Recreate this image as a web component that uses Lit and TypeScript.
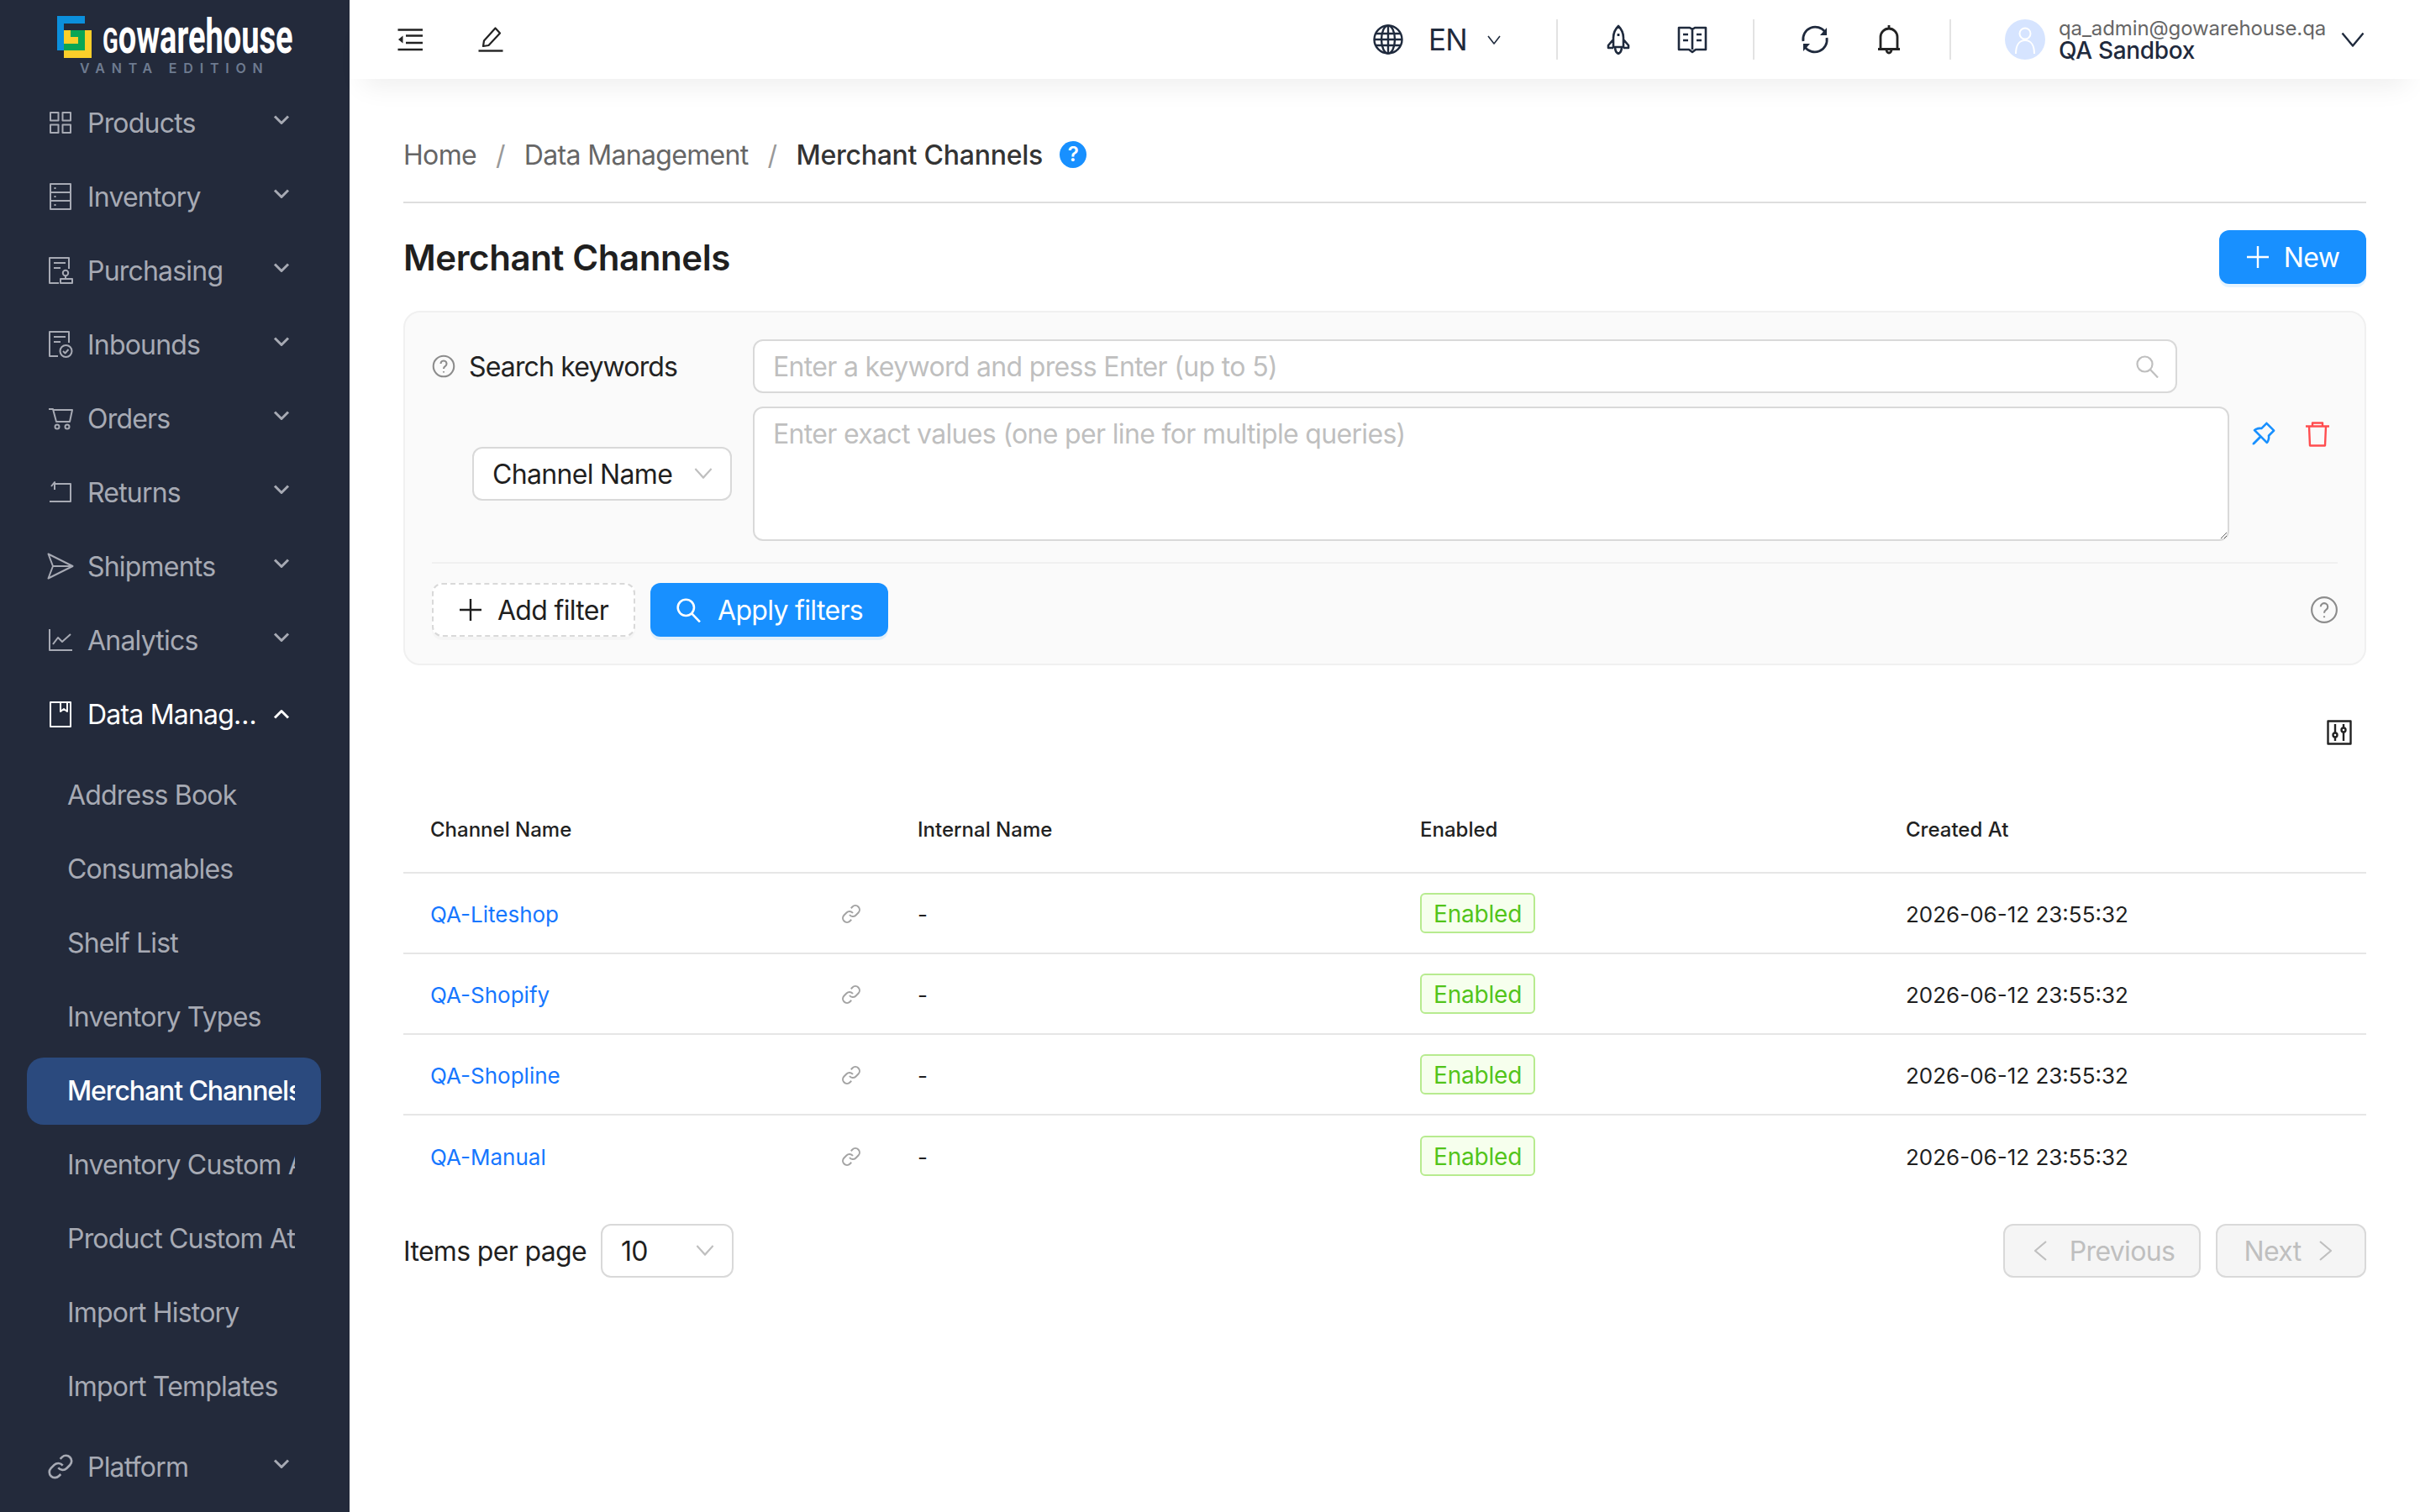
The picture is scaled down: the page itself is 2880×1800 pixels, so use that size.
import { LitElement, html, svg, css } from 'lit';
import { customElement } from 'lit/decorators.js';
import { classMap } from 'lit/directives/class-map.js';

const linkPaths = svg`<path d="M10 13a5 5 0 0 0 7.54.54l3-3a5 5 0 0 0-7.07-7.07l-1.72 1.71" /><path d="M14 11a5 5 0 0 0-7.54-.54l-3 3a5 5 0 0 0 7.07 7.07l1.71-1.71" />`;

const navIcons: Record<string, unknown> = {
  products: svg`<rect x="4" y="4" width="9.5" height="9.5" /><rect x="18.5" y="4" width="9.5" height="9.5" /><rect x="4" y="18.5" width="9.5" height="9.5" /><rect x="18.5" y="18.5" width="9.5" height="9.5" />`,
  inventory: svg`<rect x="4" y="1" width="24" height="30" /><path d="M4 11h24M4 21h24M8.5 6h2M8.5 16h2M8.5 26h2" />`,
  purchasing: svg`<path d="M14 31H3V1h23v13M8 7h14M8 13h8" /><circle cx="22" cy="19" r="3.2" /><path d="M22 22v4" /><rect x="16" y="26" width="14" height="5" />`,
  inbounds: svg`<path d="M13 30H3V1h23v13M8 7h14M8 13h8" /><circle cx="22.5" cy="24" r="7" /><path d="M19 24l2.5 2.5 4-4.5" />`,
  orders: svg`<path d="M2 5h5l4 15h16l3-14H8" /><circle cx="12" cy="26" r="2.5" /><circle cx="24" cy="26" r="2.5" />`,
  returns: svg`<path d="M5 9l4-5v9M9 6h19v21H3" />`,
  shipments: svg`<path d="M1.5 1.5L30.5 16 1.5 30.5 7 16zM7 16h23" />`,
  analytics: svg`<path d="M3 3v25h27M7 21l6-8 5 5 10-9" />`,
  data: svg`<rect x="4" y="2" width="24" height="29" /><path d="M16 2v11l4-3 4 3V2" />`,
  platform: svg`<g transform="scale(1.33)">${linkPaths}</g>`,
};

const navTop = [
  ['Products', 'products'],
  ['Inventory', 'inventory'],
  ['Purchasing', 'purchasing'],
  ['Inbounds', 'inbounds'],
  ['Orders', 'orders'],
  ['Returns', 'returns'],
  ['Shipments', 'shipments'],
  ['Analytics', 'analytics'],
];

const subItems = [
  'Address Book',
  'Consumables',
  'Shelf List',
  'Inventory Types',
  'Merchant Channels',
  'Inventory Custom Attributes',
  'Product Custom Attributes',
  'Import History',
  'Import Templates',
];

const channels = ['QA-Liteshop', 'QA-Shopify', 'QA-Shopline', 'QA-Manual'];

const helpIcon = svg`<circle cx="16" cy="16" r="14" /><path d="M12 12.5a4 4 0 1 1 6.2 3.4c-1.4.9-2.2 1.7-2.2 3.6" /><path d="M16 23v1.6" />`;
const searchIcon = svg`<circle cx="11.5" cy="11.5" r="9" /><path d="M18 18l9 9.5" />`;
const plusIcon = svg`<path d="M14 1v26M1 14h26" />`;

@customElement('app-root')
export class AppRoot extends LitElement {
  static styles = css`
    :host {
      display: flex;
      width: 2880px;
      height: 1800px;
      overflow: hidden;
      background: #fff;
      color: #1f1f1f;
      font-family: Inter, 'Liberation Sans', sans-serif;
      font-size: 32px;
      letter-spacing: -0.67px;
    }

    svg {
      display: block;
      flex: none;
    }

    .ico {
      fill: none;
      stroke: currentColor;
      stroke-width: 2;
      stroke-linejoin: round;
    }

    /* sidebar */
    .side {
      flex: none;
      width: 416px;
      height: 1800px;
      overflow: hidden;
      background: #232a3b;
      color: #a7aab4;
      letter-spacing: -0.8px;
    }

    .brand {
      height: 102px;
      padding: 19px 0 0 68px;
      box-sizing: border-box;
    }

    .brand-row {
      display: flex;
      height: 50px;
    }

    .wordmark {
      margin-left: 13px;
      font-family: Roboto, sans-serif;
      font-weight: 700;
      font-size: 58px;
      line-height: 44px;
      letter-spacing: 0;
      padding-top: 2px;
      color: #fff;
      transform: scaleX(0.655);
      transform-origin: left top;
      white-space: nowrap;
    }

    .wordmark::first-letter {
      font-size: 42px;
    }

    .edition {
      margin: 3px 0 0 27px;
      font-size: 16px;
      line-height: 18px;
      font-weight: 600;
      letter-spacing: 7.8px;
      color: #6e7b90;
      white-space: nowrap;
    }

    .nav-row {
      display: flex;
      align-items: center;
      height: 88px;
      padding-left: 56px;
    }

    .nav-row.open {
      color: #fff;
    }

    .nav-ico {
      width: 32px;
      height: 32px;
    }

    .nav-label {
      width: 206px;
      margin-left: 16px;
      white-space: nowrap;
      overflow: hidden;
      text-overflow: ellipsis;
    }

    .nav-caret {
      width: 20px;
      height: 12px;
      margin: -6px 0 0 15px;
      stroke-width: 3;
    }

    .open .nav-caret {
      margin-top: 0;
    }

    .sub {
      display: flex;
      flex-direction: column;
      gap: 8px;
      margin: 13px 0 11px;
    }

    .sub-item {
      width: 350px;
      height: 80px;
      margin-left: 32px;
      padding: 0 31px 0 48px;
      box-sizing: border-box;
      border-radius: 20px;
      line-height: 80px;
    }

    .sub-item.active {
      background: #2b4a7e;
      color: #fff;
      font-weight: 500;
      letter-spacing: -1.1px;
    }

    .sub-text {
      display: block;
      white-space: nowrap;
      overflow: hidden;
    }

    /* header */
    .main {
      flex: 1;
      min-width: 0;
    }

    .topbar {
      display: flex;
      align-items: center;
      height: 94px;
      padding: 0 66px 0 54px;
      background: #fff;
      box-shadow: 0 24px 32px -16px rgba(0, 0, 0, 0.07);
      color: #1f2a3d;
    }

    .tb-ico {
      width: 36px;
      height: 36px;
    }

    .pen {
      margin-left: 60px;
      color: #222;
    }

    .collapse {
      color: #222;
    }

    .globe {
      margin-left: auto;
      stroke-width: 2.4;
    }

    .lang {
      width: 44px;
      margin-left: 30px;
      font-size: 35px;
      line-height: 48px;
      letter-spacing: -0.8px;
    }

    .lang-caret {
      width: 16px;
      height: 11px;
      margin-left: 26px;
      stroke-width: 1.6;
    }

    .sep {
      flex: none;
      width: 2px;
      height: 48px;
      margin: 0 54px;
      background: #e3e3e3;
    }

    .sep.first {
      margin-left: 66px;
    }

    .sep.last {
      margin-right: 64px;
    }

    .gap {
      margin-left: 52px;
    }

    .avatar {
      width: 48px;
      height: 48px;
      color: #fff;
    }

    .user {
      width: 320px;
      margin-left: 16px;
      white-space: nowrap;
    }

    .user-mail {
      font-size: 24px;
      line-height: 26px;
      letter-spacing: -0.1px;
      color: #666;
    }

    .user-name {
      font-size: 28px;
      line-height: 27px;
      font-weight: 500;
      letter-spacing: -0.3px;
      color: #1f2a3d;
    }

    .user-caret {
      width: 28px;
      height: 18px;
      margin-left: 16px;
      stroke-width: 2.4;
    }

    /* content */
    .content {
      padding: 68px 64px 0;
    }

    .crumbs {
      display: flex;
      align-items: center;
      height: 44px;
      color: #666;
      white-space: nowrap;
    }

    .crumb-sep {
      margin: 0 23px;
      color: #999;
    }

    .crumb-now {
      color: #333;
      font-weight: 500;
      letter-spacing: -0.25px;
    }

    .badge {
      width: 32px;
      height: 32px;
      margin-left: 20px;
      border-radius: 50%;
      background: #1890ff;
      color: #fff;
      font-size: 24px;
      font-weight: 600;
      line-height: 32px;
      text-align: center;
    }

    .rule {
      height: 2px;
      margin-top: 34px;
      background: #dedede;
    }

    .title-row {
      display: flex;
      align-items: center;
      justify-content: space-between;
      margin-top: 32px;
    }

    h1 {
      margin: 0;
      font-size: 42px;
      font-weight: 600;
      letter-spacing: -0.4px;
      color: #1f1f1f;
    }

    .btn {
      display: flex;
      align-items: center;
      height: 64px;
      box-sizing: border-box;
      border-radius: 12px;
      white-space: nowrap;
    }

    .btn.primary {
      background: #1890ff;
      color: #fff;
      box-shadow: 0 4px 0 rgba(5, 145, 255, 0.1);
    }

    .btn-new {
      justify-content: center;
      width: 175px;
      gap: 17px;
    }

    .plus {
      width: 28px;
      height: 28px;
      stroke-width: 2.4;
    }

    /* filters */
    .filters {
      margin-top: 32px;
      padding: 32px 32px 32px;
      border: 2px solid #f0f0f0;
      border-radius: 20px;
      background: #fafafa;
    }

    .f-row {
      display: flex;
      align-items: center;
    }

    .f-label {
      display: flex;
      align-items: center;
      gap: 16px;
      width: 382px;
      color: #222;
      letter-spacing: -0.85px;
    }

    .hint {
      width: 28px;
      height: 28px;
      color: #8c8c8c;
      stroke-width: 2.4;
    }

    input,
    textarea {
      display: block;
      box-sizing: border-box;
      border: 2px solid #d9d9d9;
      border-radius: 12px;
      background: #fff;
      color: #1f1f1f;
      font: inherit;
      letter-spacing: inherit;
      outline: none;
    }

    input::placeholder,
    textarea::placeholder {
      color: #bfbfbf;
      opacity: 1;
    }

    .kw {
      position: relative;
      width: 1695px;
    }

    .kw input {
      width: 100%;
      height: 64px;
      padding: 0 60px 0 22px;
    }

    .kw svg {
      position: absolute;
      right: 22px;
      top: 18px;
      width: 28px;
      height: 28px;
      color: #bfbfbf;
      stroke-width: 2.2;
    }

    .f-row.second {
      margin-top: 16px;
      align-items: flex-start;
    }

    .sel-cell {
      display: flex;
      align-items: center;
      justify-content: flex-end;
      width: 382px;
      height: 160px;
      padding-right: 25px;
      box-sizing: border-box;
    }

    .select {
      display: flex;
      align-items: center;
      justify-content: space-between;
      height: 64px;
      box-sizing: border-box;
      border: 2px solid #d9d9d9;
      border-radius: 12px;
      background: #fff;
      color: #1f1f1f;
      white-space: nowrap;
    }

    .select.field {
      width: 309px;
      padding: 0 20px 0 22px;
    }

    .select.size {
      width: 158px;
      padding: 0 20px 0 22px;
    }

    .sel-caret {
      width: 24px;
      height: 16px;
      color: #bfbfbf;
      stroke-width: 1.8;
    }

    textarea {
      flex: none;
      width: 1757px;
      height: 160px;
      padding: 9px 22px;
      line-height: 44px;
    }

    .f-actions {
      display: flex;
      gap: 32px;
      margin: 16px 0 0 25px;
    }

    .pin {
      width: 32px;
      height: 32px;
      fill: #1890ff;
    }

    .trash {
      width: 32px;
      height: 32px;
      margin-top: 1px;
      color: #ff4d4f;
      stroke-width: 2.4;
    }

    .f-div {
      height: 2px;
      margin-top: 25px;
      background: #f0f0f0;
    }

    .f-foot {
      display: flex;
      align-items: center;
      gap: 18px;
      margin-top: 23px;
    }

    .btn-add {
      justify-content: center;
      gap: 18px;
      width: 242px;
      border: 2px dashed #d9d9d9;
      background: #fff;
      box-shadow: 0 4px 0 rgba(0, 0, 0, 0.02);
    }

    .btn-add .plus {
      width: 28px;
      height: 28px;
    }

    .btn-apply {
      justify-content: center;
      gap: 20px;
      width: 283px;
    }

    .btn-apply svg {
      width: 30px;
      height: 30px;
      stroke-width: 2.4;
    }

    .foot-help {
      width: 34px;
      height: 34px;
      margin-left: auto;
      margin-right: -1px;
      color: #8c8c8c;
    }

    /* table */
    .tools {
      display: flex;
      justify-content: flex-end;
      margin-top: 65px;
      padding-right: 17px;
    }

    .tools svg {
      width: 30px;
      height: 30px;
      color: #222;
      stroke-width: 2.4;
    }

    .t-row {
      display: grid;
      grid-template-columns: 580px 598px 578px 1fr;
      align-items: center;
      height: 96px;
      padding-top: 2px;
      box-sizing: border-box;
      font-size: 26px;
      letter-spacing: 0;
      border-bottom: 2px solid #e6e6e6;
    }

    .t-row:last-child {
      border-bottom: 0;
    }

    .t-row.head {
      height: 104px;
      padding-top: 0;
      margin-top: 49px;
      font-size: 24px;
      font-weight: 500;
      color: #222;
    }

    .t-row > div {
      padding-left: 32px;
    }

    .name-cell {
      display: flex;
      align-items: center;
      justify-content: space-between;
      padding-right: 35px;
    }

    .name-cell a {
      color: #1677ff;
    }

    .chain {
      width: 24px;
      height: 24px;
      color: #a3a3a3;
      stroke-width: 2;
    }

    .tag-cell {
      display: flex;
      margin-top: -2px;
    }

    .tag {
      height: 48px;
      padding: 0 14px;
      box-sizing: border-box;
      border: 2px solid #b7eb8f;
      border-radius: 6px;
      background: #f6ffed;
      color: #52c41a;
      font-size: 28px;
      letter-spacing: -0.2px;
      line-height: 46px;
    }

    /* pagination */
    .pager {
      display: flex;
      align-items: center;
      margin-top: 33px;
    }

    .pager-label {
      margin-right: 17px;
    }

    .pg-btn {
      justify-content: center;
      margin-left: 18px;
      border: 2px solid #d9d9d9;
      background: #f5f5f5;
      color: #bfbfbf;
    }

    .pg-prev {
      gap: 25px;
      width: 235px;
      padding-left: 3px;
      margin-left: auto;
    }

    .pg-next {
      gap: 20px;
      width: 179px;
      padding-right: 4px;
    }

    .pg-btn svg {
      width: 20px;
      height: 26px;
      stroke-width: 2.2;
    }
  `;

  private caret(cls: string, up = false) {
    return html`<svg class="ico ${cls}" viewBox="0 0 20 12" preserveAspectRatio="none">
      <path d=${up ? 'M2 10.5l8-8 8 8' : 'M2 1.5l8 8 8-8'} />
    </svg>`;
  }

  private renderSide() {
    return html`
      <aside class="side">
        <div class="brand">
          <div class="brand-row">
            <svg width="41" height="50" viewBox="0 0 41 50">
              <path fill="#0b8fdc" d="M0 0h33v9H8v32H0z" />
              <path fill="#fccf2a" d="M8 17h33v33H8z" />
              <path fill="#0aa655" d="M16 17h17v24H8v-8h17v-8h-9z" />
            </svg>
            <div class="wordmark">Gowarehouse</div>
          </div>
          <div class="edition">VANTA EDITION</div>
        </div>
        ${navTop.map(
          ([label, icon]) => html`
            <div class="nav-row">
              <svg class="ico nav-ico" viewBox="0 0 32 32">${navIcons[icon]}</svg>
              <span class="nav-label">${label}</span>
              ${this.caret('nav-caret')}
            </div>
          `,
        )}
        <div class="nav-row open">
          <svg class="ico nav-ico" viewBox="0 0 32 32">${navIcons.data}</svg>
          <span class="nav-label">Data Management</span>
          ${this.caret('nav-caret', true)}
        </div>
        <div class="sub">
          ${subItems.map(
            (item) => html`
              <div class=${classMap({ 'sub-item': true, active: item === 'Merchant Channels' })}>
                <span class="sub-text">${item}</span>
              </div>
            `,
          )}
        </div>
        <div class="nav-row">
          <svg class="ico nav-ico" viewBox="0 0 32 32">${navIcons.platform}</svg>
          <span class="nav-label">Platform</span>
          ${this.caret('nav-caret')}
        </div>
      </aside>
    `;
  }

  private renderTopbar() {
    return html`
      <header class="topbar">
        <svg class="tb-ico collapse" viewBox="0 0 36 36">
          <path fill="none" stroke="currentColor" stroke-width="2.4" d="M3.5 6.5h29.5M13 13.5h20M13 22h20M3.5 30h29.5" />
          <path fill="currentColor" d="M4 18l5.5-4.5v9z" />
        </svg>
        <svg class="ico tb-ico pen" viewBox="0 0 36 36">
          <path stroke-width="2.4" d="M3.5 31.5h29" />
          <path stroke-width="2.2" d="M23.5 4.5l5.5 6L15.5 25l-6.5 1 1-6.5z" />
        </svg>
        <svg class="ico tb-ico globe" viewBox="0 0 36 36">
          <circle cx="18" cy="18" r="16.5" />
          <ellipse cx="18" cy="18" rx="8" ry="16.5" />
          <path d="M18 1.5v33M3 11h30M3 25h30M1.5 18h33" />
        </svg>
        <span class="lang">EN</span>
        <svg class="ico lang-caret" viewBox="0 0 16 11" preserveAspectRatio="none"><path d="M1 1l7 9 7-9" /></svg>
        <span class="sep first"></span>
        <svg class="ico tb-ico" viewBox="0 0 36 36">
          <path stroke-width="2.6" d="M18 2c-4 4-6 9-6 14v11h12V16c0-5-2-10-6-14zM12 18l-6 7v3h6M24 18l6 7v3h-6M14 27c0 4 2 7 4 8 2-1 4-4 4-8" />
          <path stroke-width="2.8" d="M18 11v3" />
        </svg>
        <svg class="ico tb-ico gap" viewBox="0 0 36 36">
          <path stroke-width="2.6" d="M2 4h13l3 2 3-2h13v26H22l-4 3-4-3H2zM18 6v24M7 12h6M7 19h6M23 12h6M23 19h6" />
        </svg>
        <span class="sep"></span>
        <svg class="ico tb-ico" viewBox="0 0 36 36">
          <path stroke-width="2.8" d="M4 20A14.500 14.500 0 0 1 30 9M32 16A14.500 14.500 0 0 1 6 27" />
          <path fill="currentColor" stroke="none" d="M32 4v9h-8zM4 32v-9h8z" />
        </svg>
        <svg class="ico tb-ico gap" viewBox="0 0 36 36">
          <path stroke-width="2.8" stroke="#222" d="M18 1v4M8 29V15a10 10 0 0 1 20 0v14M5 29.500h26M15 30a3 4 0 0 0 6 0" />
        </svg>
        <span class="sep last"></span>
        <svg class="avatar" viewBox="0 0 48 48">
          <circle cx="24" cy="24" r="24" fill="#d6e4ff" />
          <circle cx="24" cy="17" r="6.500" fill="none" stroke="currentColor" stroke-width="2" />
          <path fill="none" stroke="currentColor" stroke-width="2" d="M13 41c0-10 4-16 11-16s11 6 11 16" />
        </svg>
        <div class="user">
          <div class="user-mail">qa_admin@gowarehouse.qa</div>
          <div class="user-name">QA Sandbox</div>
        </div>
        <svg class="ico user-caret" viewBox="0 0 28 18" preserveAspectRatio="none"><path d="M1.500 1.500L14 16.500 26.500 1.500" /></svg>
      </header>
    `;
  }

  private renderFilters() {
    return html`
      <section class="filters">
        <div class="f-row">
          <div class="f-label">
            <svg class="ico hint" viewBox="0 0 32 32">${helpIcon}</svg>
            <span>Search keywords</span>
          </div>
          <div class="kw">
            <input placeholder="Enter a keyword and press Enter (up to 5)" />
            <svg class="ico" viewBox="0 0 28 28">${searchIcon}</svg>
          </div>
        </div>
        <div class="f-row second">
          <div class="sel-cell">
            <div class="select field">
              <span>Channel Name</span>
              ${this.caret('sel-caret')}
            </div>
          </div>
          <textarea placeholder="Enter exact values (one per line for multiple queries)"></textarea>
          <div class="f-actions">
            <svg class="pin" viewBox="64 64 896 896">
              <path d="M878.3 392.1L631.9 145.7c-6.5-6.5-15-9.7-23.5-9.7s-17 3.2-23.5 9.7L423.8 306.9c-12.2-1.4-24.5-2-36.8-2-73.2 0-146.4 24.1-206.5 72.3a33.23 33.23 0 00-2.7 49.4l181.7 181.7-215.4 215.2a15.8 15.8 0 00-4.6 9.8l-3.4 37.2c-.9 9.4 6.6 17.4 15.9 17.4.5 0 1 0 1.5-.1l37.2-3.4c3.7-.3 7.2-2 9.8-4.6l215.4-215.4 181.7 181.7c6.5 6.5 15 9.7 23.5 9.7 9.7 0 19.3-4.2 25.9-12.4 56.3-70.3 79.7-158.3 70.2-243.4l161.1-161.1c12.9-12.8 12.9-33.8 0-46.8zM666.2 549.3l-24.5 24.5 3.8 34.4a259.92 259.92 0 01-30.4 153.9L262 408.8c12.9-7.1 26.3-13.1 40.3-17.9 27.2-9.4 55.7-14.1 84.7-14.1 9.6 0 19.3.5 28.9 1.6l34.4 3.8 24.5-24.5L608.5 224 800 415.5 666.2 549.3z" />
            </svg>
            <svg class="ico trash" viewBox="0 0 32 32"><path d="M2 6.500h28M6 6.500l1 23h18l1-23M10 6.500V2.500h12v4" /></svg>
          </div>
        </div>
        <div class="f-div"></div>
        <div class="f-foot">
          <div class="btn btn-add">
            <svg class="ico plus" viewBox="0 0 28 28">${plusIcon}</svg>
            <span>Add filter</span>
          </div>
          <div class="btn primary btn-apply">
            <svg class="ico" viewBox="0 0 28 28">${searchIcon}</svg>
            <span>Apply filters</span>
          </div>
          <svg class="ico foot-help" viewBox="0 0 32 32">${helpIcon}</svg>
        </div>
      </section>
    `;
  }

  private renderTable() {
    return html`
      <div class="tools">
        <svg class="ico" viewBox="0 0 30 30">
          <rect x="1.500" y="1.500" width="27" height="27" />
          <path d="M10 5v20M20 5v20" />
          <circle cx="10" cy="18" r="2.500" fill="#fff" />
          <circle cx="20" cy="12" r="2.500" fill="#fff" />
        </svg>
      </div>
      <div class="table">
        <div class="t-row head">
          <div>Channel Name</div>
          <div>Internal Name</div>
          <div>Enabled</div>
          <div>Created At</div>
        </div>
        ${channels.map(
          (name) => html`
            <div class="t-row">
              <div class="name-cell">
                <a>${name}</a>
                <svg class="ico chain" viewBox="0 0 24 24">${linkPaths}</svg>
              </div>
              <div>-</div>
              <div class="tag-cell"><span class="tag">Enabled</span></div>
              <div>2026-06-12 23:55:32</div>
            </div>
          `,
        )}
      </div>
      <div class="pager">
        <span class="pager-label">Items per page</span>
        <div class="select size">
          <span>10</span>
          ${this.caret('sel-caret')}
        </div>
        <div class="btn pg-btn pg-prev">
          <svg class="ico" viewBox="0 0 18 26"><path d="M16 2L3 13l13 11" /></svg>
          <span>Previous</span>
        </div>
        <div class="btn pg-btn pg-next">
          <span>Next</span>
          <svg class="ico" viewBox="0 0 18 26"><path d="M2 2l13 11L2 24" /></svg>
        </div>
      </div>
    `;
  }

  render() {
    return html`
      ${this.renderSide()}
      <div class="main">
        ${this.renderTopbar()}
        <main class="content">
          <nav class="crumbs">
            <span>Home</span>
            <span class="crumb-sep">/</span>
            <span>Data Management</span>
            <span class="crumb-sep">/</span>
            <span class="crumb-now">Merchant Channels</span>
            <span class="badge">?</span>
          </nav>
          <div class="rule"></div>
          <div class="title-row">
            <h1>Merchant Channels</h1>
            <div class="btn primary btn-new">
              <svg class="ico plus" viewBox="0 0 28 28">${plusIcon}</svg>
              <span>New</span>
            </div>
          </div>
          ${this.renderFilters()}
          ${this.renderTable()}
        </main>
      </div>
    `;
  }
}
